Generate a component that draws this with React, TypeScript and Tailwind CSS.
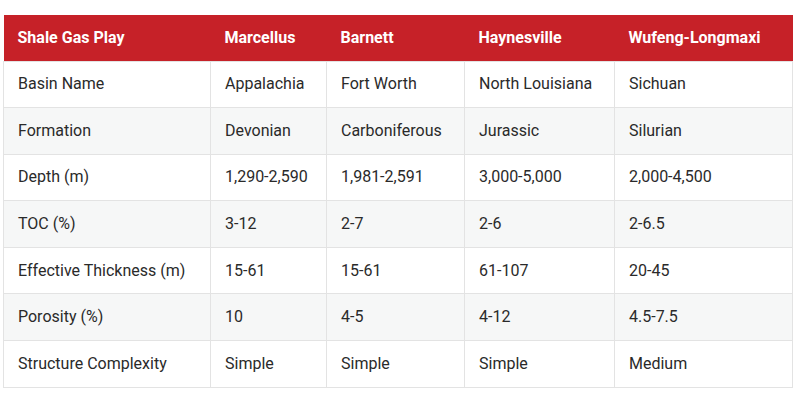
import React from 'react';

const columns = ['Shale Gas Play', 'Marcellus', 'Barnett', 'Haynesville', 'Wufeng-Longmaxi'];

const rows: string[][] = [
  ['Basin Name', 'Appalachia', 'Fort Worth', 'North Louisiana', 'Sichuan'],
  ['Formation', 'Devonian', 'Carboniferous', 'Jurassic', 'Silurian'],
  ['Depth (m)', '1,290-2,590', '1,981-2,591', '3,000-5,000', '2,000-4,500'],
  ['TOC (%)', '3-12', '2-7', '2-6', '2-6.5'],
  ['Effective Thickness (m)', '15-61', '15-61', '61-107', '20-45'],
  ['Porosity (%)', '10', '4-5', '4-12', '4.5-7.5'],
  ['Structure Complexity', 'Simple', 'Simple', 'Simple', 'Medium'],
];

const widths = ['w-[207px]', 'w-[116px]', 'w-[138px]', 'w-[150px]', 'w-[178px]'];

const App = () => {
  return (
    <div className="w-[800px] h-[403px] bg-white pl-[3px] pt-[15px] font-['Roboto',sans-serif]">
      <table className="w-[789px] table-fixed border-collapse text-[16px]">
        <colgroup>
          {widths.map((w, i) => (
            <col key={i} className={w} />
          ))}
        </colgroup>
        <thead>
          <tr className="h-[46px] bg-[#c62128]">
            {columns.map((c) => (
              <th key={c} className="px-[14px] text-left font-bold text-white">
                {c}
              </th>
            ))}
          </tr>
        </thead>
        <tbody>
          {rows.map((r, i) => (
            <tr key={r[0]} className={`h-[46.6px] ${i % 2 === 1 ? 'bg-[#f6f7f7]' : 'bg-white'}`}>
              {r.map((cell, j) => (
                <td key={j} className="border border-[#e3e3e3] px-[14px] text-[#2a2a2a]">
                  {cell}
                </td>
              ))}
            </tr>
          ))}
        </tbody>
      </table>
    </div>
  );
};

export default App;
